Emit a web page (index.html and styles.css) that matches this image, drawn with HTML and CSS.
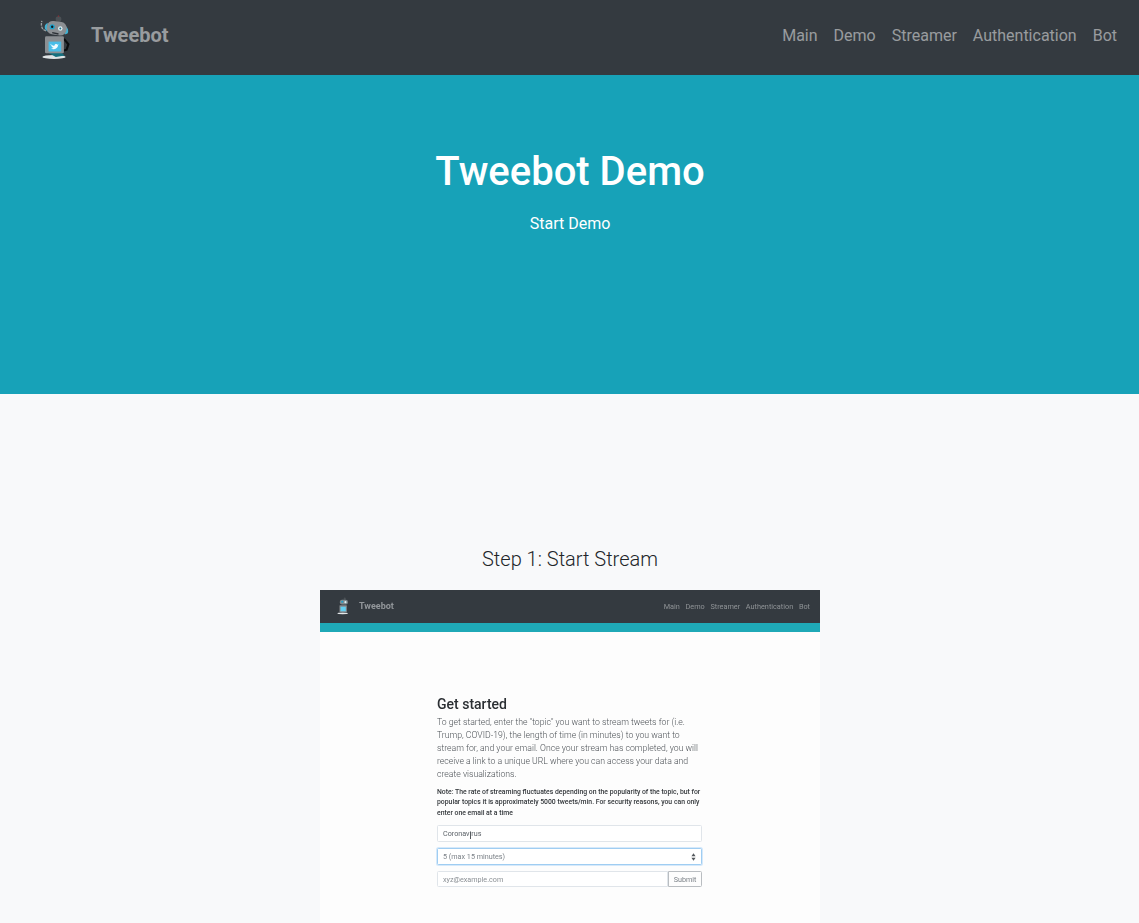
FILE: index.html
```html
<!DOCTYPE html>
<html lang="en">
<head>
<meta charset="utf-8">
<title>Tweebot Demo</title>
<link rel="stylesheet" href="styles.css">
</head>
<body>
<div class="page">
  <nav class="navbar">
    <a class="brand" href="#">
      <svg class="logo" viewBox="0 0 40 50" aria-hidden="true">
        <ellipse cx="20" cy="46" rx="13" ry="2.200" fill="#dfe4e6"/>
        <path d="M13 41h15l4 3.500-10 1.500z" fill="#14707f"/>
        <path d="M11 17C7 16 5 12 6.500 6" fill="none" stroke="#9aa0a3" stroke-width="1.500" stroke-dasharray="3 1"/>
        <path d="M31 26l5 6-2 6-3 1" fill="none" stroke="#0b0d0f" stroke-width="2.400"/>
        <circle cx="25" cy="4" r="3.200" fill="#4b5055"/>
        <path d="M25 1.500V0" stroke="#8a2f35" stroke-width="1.400"/>
        <path d="M13 8a6 6 0 0 0-3 7l3 3zM33 12a6 6 0 0 1 2 8l-3 1z" fill="#3fb1d3"/>
        <rect x="12" y="6.500" width="22" height="15" rx="6.500" transform="rotate(8 22 14)" fill="#8b8f93"/>
        <circle cx="18" cy="12.500" r="2.900" fill="#1fa4cf"/><circle cx="18" cy="12.500" r="1.300" fill="#14171a"/>
        <circle cx="27" cy="14.500" r="2.500" fill="#dff1f6"/><circle cx="27" cy="14.500" r="1.100" fill="#1f6f88"/>
        <path d="M18 19l7 1.500" stroke="#2c3036" stroke-width="1.600"/>
        <rect x="10" y="23" width="21" height="19" rx="1.500" fill="#8b8f93"/>
        <rect x="14" y="29" width="14" height="11" fill="#49bde8"/>
        <path d="M16 31.500c1.700 1.700 2.700 2.200 4.500 2.200 0-1.800 2.200-2.600 3.500-1.300l1.300-.4-.9 1.300c0 3-3.900 5.200-7.900 3.500 1.700 0 2.600-.4 3-.9-1.300-.4-2.200-1.300-2.600-1.700.4 0 .9 0 1.300-.2-1.300-.4-2.200-1.300-2.200-2.500z" fill="#f2fbff"/>
      </svg>
      <span class="brand-name">Tweebot</span>
    </a>
    <ul class="nav-links">
      <li><a href="#">Main</a></li>
      <li><a href="#">Demo</a></li>
      <li><a href="#">Streamer</a></li>
      <li><a href="#">Authentication</a></li>
      <li><a href="#">Bot</a></li>
    </ul>
  </nav>

  <header class="hero">
    <h1>Tweebot Demo</h1>
    <p>Start Demo</p>
  </header>

  <main class="content">
    <h2>Step 1: Start Stream</h2>
    <div class="shot">
      <div class="shot-nav">
        <div class="shot-brand">
          <svg class="shot-logo" viewBox="0 0 40 50" aria-hidden="true">
            <ellipse cx="19" cy="46" rx="15" ry="2.500" fill="#e4e8ea"/>
            <circle cx="25" cy="4" r="3" fill="#4b5055"/>
            <rect x="11" y="7" width="23" height="14" rx="6" fill="#7f8a8e"/>
            <circle cx="18" cy="13" r="3" fill="#1fa4cf"/>
            <circle cx="27" cy="14" r="3" fill="#dff1f6"/>
            <rect x="10" y="23" width="21" height="19" rx="1.500" fill="#85898d"/>
            <rect x="13" y="27" width="15" height="13" fill="#61d0f2"/>
          </svg>
          <span>Tweebot</span>
        </div>
        <ul class="shot-links">
          <li>Main</li><li>Demo</li><li>Streamer</li><li>Authentication</li><li>Bot</li>
        </ul>
      </div>
      <div class="shot-band"></div>
      <div class="shot-body">
        <h3>Get started</h3>
        <p class="shot-lead">To get started, enter the "topic" you want to stream tweets for (i.e. Trump, COVID-19), the length of time (in minutes) to you want to stream for, and your email. Once your stream has completed, you will receive a link to a unique URL where you can access your data and create visualizations.</p>
        <p class="shot-note">Note: The rate of streaming fluctuates depending on the popularity of the topic, but for popular topics it is approximately 5000 tweets/min. For security reasons, you can only enter one email at a time</p>
        <div class="field field-text">Coronavirus</div>
        <div class="field field-select">
          <span>5 (max 15 minutes)</span>
          <svg class="updown" viewBox="0 0 6 9" aria-hidden="true"><path d="M3 0l2.500 3.500h-5zM3 9L.5 5.500h5z"/></svg>
        </div>
        <div class="field-group">
          <div class="field field-email">xyz@example.com</div>
          <div class="submit">Submit</div>
        </div>
      </div>
    </div>
  </main>
</div>
</body>
</html>
```
FILE: styles.css
```css
* { box-sizing: border-box; }
html, body { margin: 0; padding: 0; }
body {
  font-family: Roboto, "Liberation Sans", sans-serif;
  background: #f8f9fa;
  color: #212529;
}
a { text-decoration: none; color: inherit; }
ul { list-style: none; margin: 0; padding: 0; }

.page { height: 100vh; overflow: hidden; display: flex; flex-direction: column; }

.navbar {
  flex: none;
  height: 75px;
  background: #343a40;
  display: flex;
  align-items: center;
  justify-content: space-between;
  padding: 0 22px 0 36px;
}
.brand { display: flex; align-items: center; gap: 19px; color: rgba(255,255,255,.5); }
.logo { width: 36px; height: 48px; display: block; }
.brand-name { font-size: 20px; font-weight: 700; padding-bottom: 6px; }
.nav-links { display: flex; gap: 16px; font-size: 16px; color: rgba(255,255,255,.5); padding-bottom: 4px; }

.hero {
  flex: none;
  height: 319px;
  background: #17a2b8;
  color: #fff;
  text-align: center;
  padding: 73px 0 0 1px;
}
.hero h1 { margin: 0; font-size: 40px; line-height: 48px; font-weight: 500; }
.hero p { margin: 16px 0 0; font-size: 16px; line-height: 24px; }

.content { flex: none; display: flex; flex-direction: column; align-items: center; padding: 152px 0 0 1px; }
.content h2 { margin: 0 0 18px; font-size: 20px; line-height: 26px; font-weight: 300; }

.shot { width: 500px; height: 400px; background: #fdfdfd; flex: none; filter: blur(.5px); }
.shot-nav {
  height: 33px;
  background: #343a40;
  display: flex;
  align-items: center;
  justify-content: space-between;
  padding: 0 10px 1px 16px;
}
.shot-brand { display: flex; align-items: center; gap: 9px; font-size: 9px; font-weight: 700; color: #92969a; }
.shot-logo { width: 14px; height: 18px; display: block; }
.shot-links { display: flex; gap: 5.700px; font-size: 7.300px; color: #8f9396; }

.shot-band { height: 9px; background: #1fa9b7; }

.shot-body { padding: 64px 118px 0 117px; }
.shot-body h3 { margin: 0 0 4px; font-size: 14px; line-height: 16px; font-weight: 500; color: #2b2f33; }
.shot-lead { margin: 0 0 6px; font-size: 8.700px; line-height: 12.900px; font-weight: 300; color: #4d5257; }
.shot-note { margin: 0 0 7px; font-size: 6.850px; line-height: 10.600px; font-weight: 500; color: #33373b; }

.field {
  height: 16.500px;
  border: 1px solid #e0e5ea;
  border-radius: 1.500px;
  background: #fff;
  padding: 0 5px;
  display: flex;
  align-items: center;
  font-size: 7.200px;
  color: #5c6268;
}
.field-text { margin-bottom: 6.500px; position: relative; }
.field-text::after {
  content: "";
  position: absolute;
  left: 32px;
  top: 6px;
  width: 1px;
  height: 7px;
  background: #55595d;
}
.field-select { margin-bottom: 6px; justify-content: space-between; border-color: #9fcdf2; box-shadow: 0 0 0 1px #d6e9fa; color: #7c8288; }
.updown { width: 5px; height: 8px; fill: #555a5e; }
.field-group { display: flex; }
.field-email { flex: 1; color: #8b9095; border-radius: 1.500px 0 0 1.500px; }
.submit {
  flex: none;
  width: 34px;
  height: 16.500px;
  border: 1px solid #b9bdc1;
  border-radius: 0 1.500px 1.500px 0;
  font-size: 7.200px;
  color: #7c8288;
  display: flex;
  align-items: center;
  justify-content: center;
}
```
